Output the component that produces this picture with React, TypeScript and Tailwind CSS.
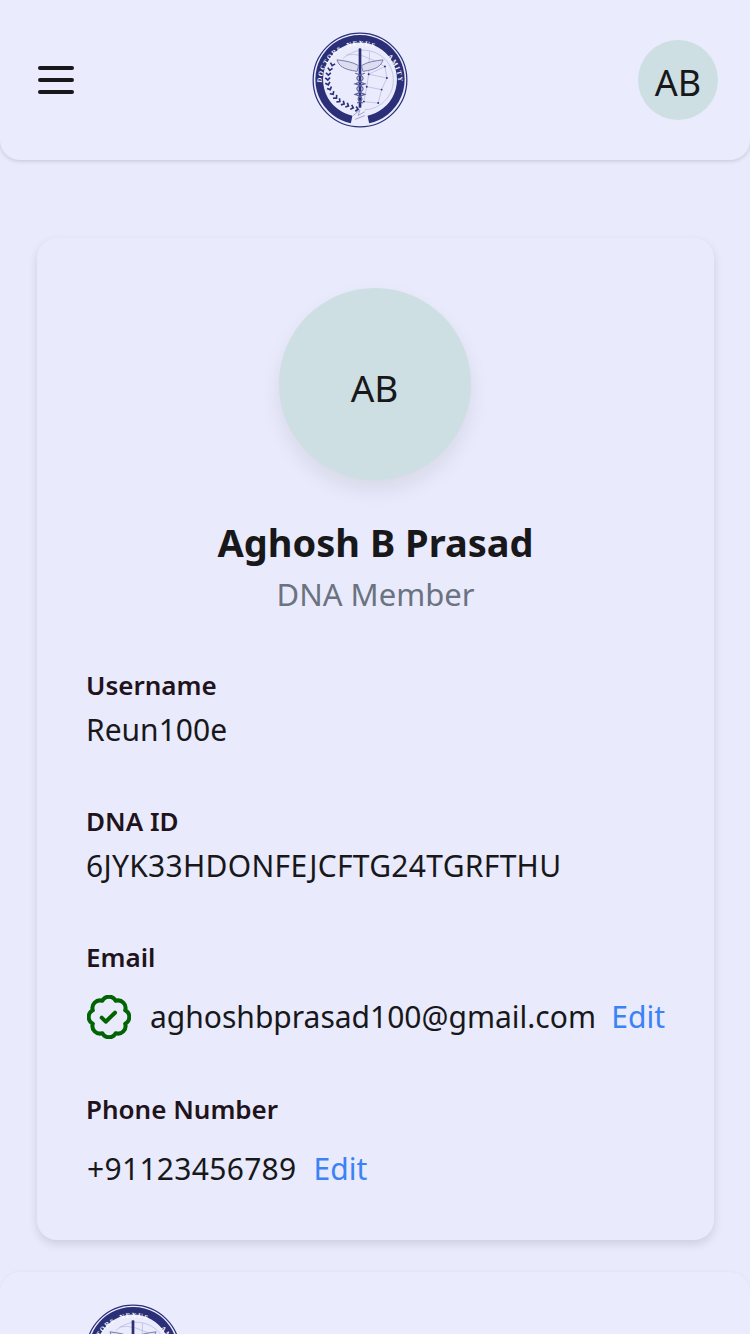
import React from 'react';

const font = { fontFamily: '"Noto Sans", "Open Sans", sans-serif' };

// x, y, angle of each laurel leaf, top to bottom
const laurel = [
  [21, 35, 105], [18.5, 40, 100], [17, 45, 92], [16.5, 50, 85], [17, 55, 72], [19, 60, 65],
  [22, 65, 55], [25.500, 69, 48], [29, 72.500, 40], [33.500, 75, 30], [38, 77, 25], [43, 79, 18], [48, 80.500, 10],
];

const nodes = [
  [59, 44], [78, 48], [57, 57], [72.500, 60], [54, 72.500], [69, 74], [76, 36],
];

const Logo = ({ className, id }: { className: string; id: string }) => (
  <svg viewBox="0 0 100 100" className={className}>
    <defs>
      <path id={id} d="M10 54 A40 40 0 1 1 90 54" />
    </defs>
    <circle cx="50" cy="50" r="48.800" fill="none" stroke="#2a2f78" strokeWidth="1.300" />
    <path d="M41.300 91.100 A42.500 42.500 0 1 1 58.700 91.100" fill="none" stroke="#2a2f78" strokeWidth="8" />
    <g fontSize="7" fill="#ffffff" fontFamily="'Liberation Serif', serif" fontWeight="700" letterSpacing="1.200">
      <text><textPath href={`#${id}`} startOffset="1%">DOCTORS</textPath></text>
      <text><textPath href={`#${id}`} startOffset="51%" textAnchor="middle">NEXUS</textPath></text>
      <text><textPath href={`#${id}`} startOffset="99%" textAnchor="end">AMITY</textPath></text>
    </g>
    <g fill="none" stroke="#a9acd2" strokeWidth="0.600">
      <path d="M32 28 A31 31 0 1 1 55 81" />
      <path d="M36 24 Q50 20 76 36 M59 44 L76 36 L78 48 L72.500 60 L69 74 M59 44 L78 48 M59 44 L57 57 L72.500 60 M57 57 L54 72.500 L69 74 M59 44 L60 20" />
    </g>
    <g fill="#2a2f78">
      {nodes.map(([x, y]) => (
        <circle key={`${x}-${y}`} cx={x} cy={y} r="1" />
      ))}
      <rect x="48.600" y="17" width="2.800" height="62" rx="1" />
    </g>
    <path d="M48.500 35 C42 31 34 30 26 29 C28 35 32 39 47 41 Z M51.500 35 C58 31 66 30 74 29 C72 35 68 39 53 41 Z" fill="#dcdef0" stroke="#5a5f9c" strokeWidth="0.800" />
    <path d="M45 43 C56 46 56 50 45 54 C56 57 56 61 45 65 C54 68 54 71 47 74 M55 43 C44 46 44 50 55 54 C44 57 44 61 55 65 C46 68 46 71 53 74" fill="none" stroke="#5a5f9c" strokeWidth="1.200" />
    <g fill="none" stroke="#2a2f78" strokeWidth="1.700">
      {laurel.map(([x, y, a]) => (
        <path key={`${x}-${y}`} d="M-2.500 -2.500 L0 0 L-2.500 2.500" transform={`translate(${x} ${y}) rotate(${a})`} />
      ))}
    </g>
    <path d="M43 87 L50 81 L48 87 L55 83 M45 91 L55 87" fill="none" stroke="#8d91c0" strokeWidth="0.800" />
  </svg>
);

const Field = ({ label, children }: { label: string; children: React.ReactNode }) => (
  <div>
    <p className="text-[26px] leading-[36px] font-semibold text-[#21131c]">{label}</p>
    {children}
  </div>
);

const EditLink = () => <span className="text-[30px] leading-[44px] text-[#3b82f6]">Edit</span>;

export default function App() {
  return (
    <div style={font} className="h-[1334px] w-[750px] overflow-hidden bg-[#e9eafb] text-[#18181b]">
      <header className="flex h-[160px] items-center justify-between rounded-b-[20px] bg-[#eaebfc] pl-[38px] pr-[32px] shadow-[0_1px_4px_rgba(0,0,0,0.16)]">
        <div className="flex w-[36px] flex-col gap-[8px]">
          <span className="h-[4px] rounded-full bg-[#18181b]" />
          <span className="h-[4px] rounded-full bg-[#18181b]" />
          <span className="h-[4px] rounded-full bg-[#18181b]" />
        </div>
        <Logo id="logoArcTop" className="ml-[8px] h-[96px] w-[96px]" />
        <div className="flex h-[80px] w-[80px] items-center justify-center rounded-full bg-[#cddfe3] pt-[6px] text-[36px]">AB</div>
      </header>

      <main className="ml-[37px] mr-[36px] mt-[78px] h-[1002px] rounded-[20px] bg-[#e9eafb] px-[49px] pt-[50px] shadow-[0_4px_10px_rgba(0,0,0,0.12)]">
        <div className="flex flex-col items-center">
          <div className="mr-[2px] flex h-[192px] w-[192px] items-center justify-center rounded-full bg-[#cddfe3] pt-[8px] text-[37px] shadow-[0_10px_20px_rgba(0,0,0,0.08)]">AB</div>
          <h1 className="mt-[36px] text-[38px] leading-[52px] font-bold">Aghosh B Prasad</h1>
          <p className="mt-[6px] text-[31px] leading-[40px] text-[#6b7280]">DNA Member</p>
        </div>
        <div className="mt-[53px] flex flex-col">
          <Field label="Username">
            <p className="mt-[1px] text-[30px] leading-[52px]">Reun100e</p>
          </Field>
          <div className="mt-[47px]">
            <Field label="DNA ID">
              <p className="mt-[1px] text-[30px] leading-[52px] tracking-[0.3px]">6JYK33HDONFEJCFTG24TGRFTHU</p>
            </Field>
          </div>
          <div className="mt-[47px]">
            <Field label="Email">
              <div className="mt-[20px] flex items-center justify-between pl-[1px]">
                <svg viewBox="0 0 44 44" className="h-[44px] w-[44px]" fill="none" stroke="#006400" strokeWidth="4" strokeLinecap="round" strokeLinejoin="round">
                  <path d="M15.300 5.830 A7.500 7.500 0 0 1 28.700 5.830 A7.500 7.500 0 0 1 38.170 15.300 A7.500 7.500 0 0 1 38.170 28.700 A7.500 7.500 0 0 1 28.700 38.170 A7.500 7.500 0 0 1 15.300 38.170 A7.500 7.500 0 0 1 5.830 28.700 A7.500 7.500 0 0 1 5.830 15.300 A7.500 7.500 0 0 1 15.300 5.830 Z" />
                  <path d="M14.700 22.700 L18.700 26.700 L28 17.700" />
                </svg>
                <span className="ml-[19px] flex-1 text-[30px] leading-[44px]">aghoshbprasad100@gmail.com</span>
                <EditLink />
              </div>
            </Field>
          </div>
          <div className="mt-[52px]">
            <Field label="Phone Number">
              <div className="mt-[20px] flex items-center gap-[17px] pl-[1px]">
                <span className="text-[30px] leading-[44px] tracking-[0.3px]">+91123456789</span>
                <EditLink />
              </div>
            </Field>
          </div>
        </div>
      </main>

      <footer className="mt-[32px] h-[200px] rounded-t-[20px] bg-[#eaebfc] pl-[85px] pt-[32px] shadow-[0_-1px_3px_rgba(0,0,0,0.03)]">
        <Logo id="logoArcBottom" className="h-[96px] w-[96px]" />
      </footer>
    </div>
  );
}
